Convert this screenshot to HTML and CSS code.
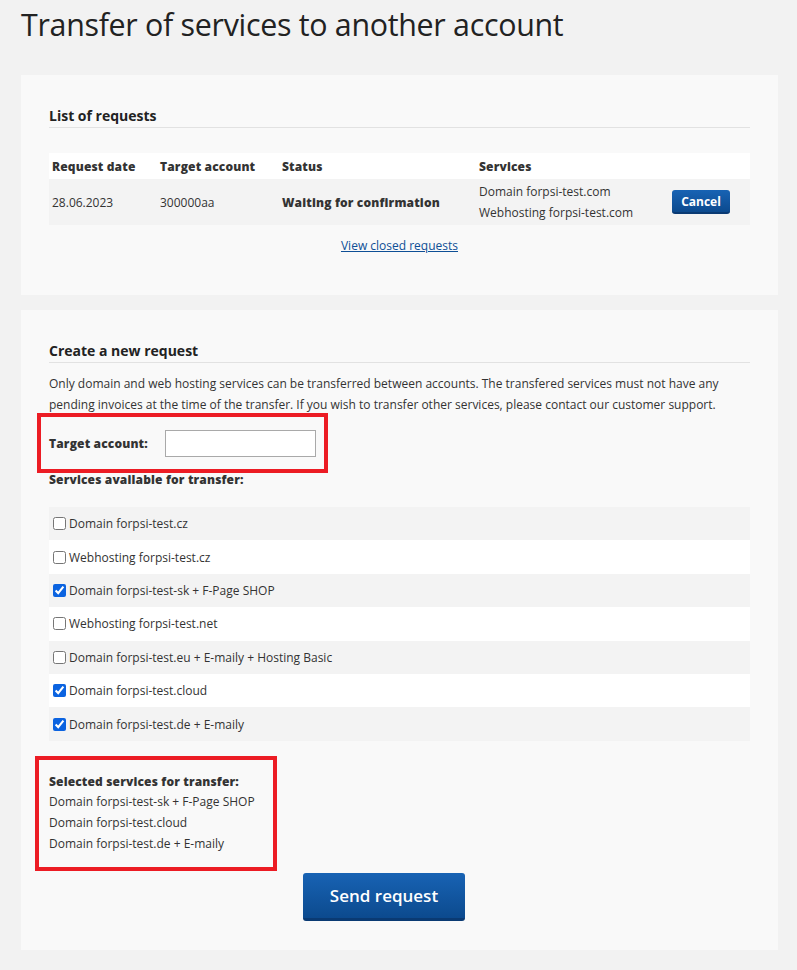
FILE: index.html
```html
<!DOCTYPE html>
<html lang="en">
  <head>
    <meta charset="UTF-8" />
    <title>Transfer of services to another account</title>
    <link rel="stylesheet" href="styles.css">
  </head>
  <body>
    <h1 class="page-title">Transfer of services to another account</h1>

    <section class="panel panel-requests">
      <h2 class="panel-heading">List of requests</h2>
      <table class="requests">
        <thead>
          <tr>
            <th class="col-date">Request date</th>
            <th class="col-account">Target account</th>
            <th class="col-status">Status</th>
            <th class="col-services">Services</th>
            <th></th>
          </tr>
        </thead>
        <tbody>
          <tr>
            <td>28.06.2023</td>
            <td>300000aa</td>
            <td class="status">Waiting for confirmation</td>
            <td class="services">Domain forpsi-test.com<br />Webhosting forpsi-test.com</td>
            <td><button class="btn btn-small">Cancel</button></td>
          </tr>
        </tbody>
      </table>
      <div class="closed-link"><a href="#">View closed requests</a></div>
    </section>

    <section class="panel panel-new">
      <h2 class="panel-heading">Create a new request</h2>
      <p class="intro">
        Only domain and web hosting services can be transferred between accounts. The transfered services must not have any
        pending invoices at the time of the transfer. If you wish to transfer other services, please contact our customer support.
      </p>

      <div class="target-box">
        <label for="target">Target account:</label>
        <input type="text" id="target" />
      </div>

      <div class="label-strong">Services available for transfer:</div>
      <ul class="service-list">
        <li><label><input type="checkbox" /> Domain forpsi-test.cz</label></li>
        <li><label><input type="checkbox" /> Webhosting forpsi-test.cz</label></li>
        <li><label><input type="checkbox" checked /> Domain forpsi-test-sk + F-Page SHOP</label></li>
        <li><label><input type="checkbox" /> Webhosting forpsi-test.net</label></li>
        <li><label><input type="checkbox" /> Domain forpsi-test.eu + E-maily + Hosting Basic</label></li>
        <li><label><input type="checkbox" checked /> Domain forpsi-test.cloud</label></li>
        <li><label><input type="checkbox" checked /> Domain forpsi-test.de + E-maily</label></li>
      </ul>

      <div class="selected-box">
        <div class="label-strong">Selected services for transfer:</div>
        <div>Domain forpsi-test-sk + F-Page SHOP</div>
        <div>Domain forpsi-test.cloud</div>
        <div>Domain forpsi-test.de + E-maily</div>
      </div>

      <div class="actions">
        <button class="btn btn-large">Send request</button>
      </div>
    </section>
  </body>
</html>
```

FILE: styles.css
```css
* {
  margin: 0;
  padding: 0;
  box-sizing: border-box;
}

body {
  font-family: 'Open Sans', sans-serif;
  font-size: 12px;
  color: #333;
  background: #f2f2f2;
  padding: 0 19px 20px 21px;
}

.page-title {
  font-size: 30.4px;
  font-weight: 400;
  color: #222;
  line-height: 50px;
  margin-bottom: 25px;
  letter-spacing: -0.3px;
}

.panel {
  background: #f9f9f9;
  padding: 28px 28px 20px 28px;
  margin-bottom: 15px;
}

.panel-requests {
  height: 220px;
  padding-top: 30px;
}

.panel-new {
  padding-top: 30px;
  height: 640px;
}

.panel-heading {
  font-size: 14px;
  font-weight: 700;
  color: #222;
  line-height: 22px;
  border-bottom: 1px solid #e2e2e2;
}

.label-strong,
.requests th,
.requests .status,
.target-box label {
  font-weight: 800;
  letter-spacing: 0.15px;
  color: #333;
}

/* Requests table */
.requests {
  width: 100%;
  border-collapse: collapse;
  margin-top: 25px;
}

.requests th {
  background: #fff;
  text-align: left;
  height: 26px;
  padding: 0 3px;
}

.requests td {
  background: #f3f3f3;
  height: 46px;
  padding: 0 3px;
  vertical-align: middle;
}

.requests .col-date { width: 108px; }
.requests .col-account { width: 122px; }
.requests .col-status { width: 197px; }
.requests .col-services { width: 193px; }

.requests .services {
  line-height: 21px;
}

.closed-link {
  text-align: center;
  margin-top: 12px;
}

.closed-link a {
  color: #0e4f96;
}

/* Buttons */
.btn {
  color: #fff;
  border: none;
  border-bottom: 2px solid #0a3a73;
  background: linear-gradient(#1863b4, #0c4a8e);
  border-radius: 3px;
  font-family: 'Open Sans', sans-serif;
  font-weight: 700;
  cursor: pointer;
}

.btn-small {
  font-size: 12px;
  width: 58px;
  height: 24px;
}

.btn-large {
  font-size: 17px;
  font-weight: 600;
  width: 162px;
  height: 48px;
  border-bottom-width: 3px;
}

/* New request form */
.intro {
  margin-top: 10px;
  line-height: 21px;
}

.target-box {
  display: flex;
  align-items: center;
  width: 291px;
  height: 60px;
  border: 4px solid #ec1c24;
  margin: -2px 0 0 -12px;
  padding-left: 8px;
}

.target-box label {
  width: 116px;
}

.target-box input {
  width: 151px;
  height: 27px;
  border: 1px solid #a9a9a9;
  background: #fff;
}

.panel-new > .label-strong {
  line-height: 14px;
}

.service-list {
  list-style: none;
  margin-top: 20px;
}

.service-list li {
  height: 33.4px;
  display: flex;
  align-items: center;
  padding-left: 3px;
  background: #fff;
}

.service-list li:nth-child(odd) {
  background: #f3f3f3;
}

.service-list label {
  display: flex;
  align-items: center;
  gap: 2px;
}

.service-list input {
  width: 13px;
  height: 13px;
  margin: 0 1px;
  accent-color: #0b63e0;
}

.selected-box {
  width: 242px;
  height: 115px;
  border: 4px solid #ec1c24;
  margin: 15px 0 0 -14px;
  padding: 12px 0 0 10px;
  line-height: 20.7px;
}

.actions {
  text-align: center;
  padding-right: 31px;
  margin-top: 2px;
}
```
